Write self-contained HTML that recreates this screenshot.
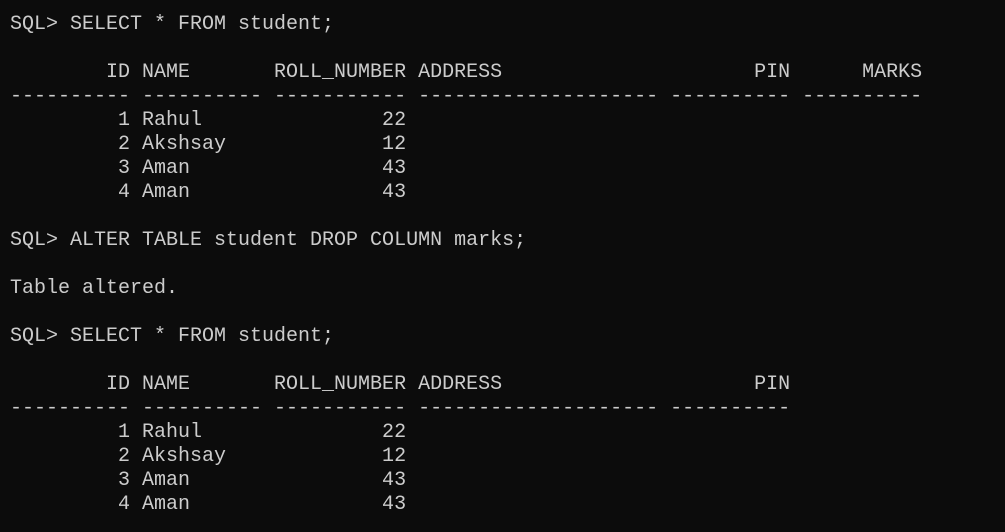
<!DOCTYPE html>
<html><head><meta charset="utf-8"><style>
html,body{margin:0;padding:0;background:#0c0c0c;width:1005px;height:532px;overflow:hidden}
pre{margin:0;position:absolute;left:10px;top:13px;font-family:"Liberation Mono",monospace;font-size:20px;line-height:24px;color:#cccccc;letter-spacing:0}
</style></head><body><pre>SQL&gt; SELECT * FROM student;

        ID NAME       ROLL_NUMBER ADDRESS                     PIN      MARKS
---------- ---------- ----------- -------------------- ---------- ----------
         1 Rahul               22
         2 Akshsay             12
         3 Aman                43
         4 Aman                43

SQL&gt; ALTER TABLE student DROP COLUMN marks;

Table altered.

SQL&gt; SELECT * FROM student;

        ID NAME       ROLL_NUMBER ADDRESS                     PIN
---------- ---------- ----------- -------------------- ----------
         1 Rahul               22
         2 Akshsay             12
         3 Aman                43
         4 Aman                43
</pre></body></html>
